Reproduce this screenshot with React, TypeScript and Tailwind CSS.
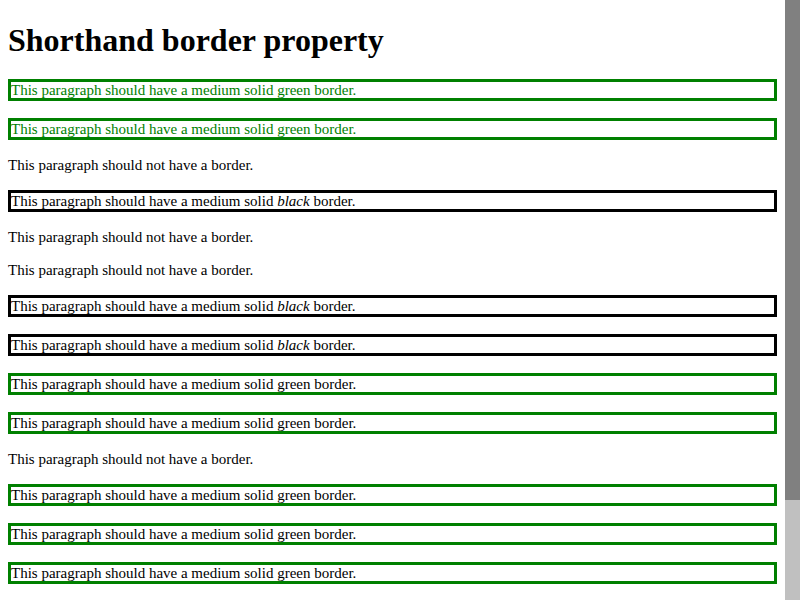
import type { ReactNode } from 'react'

type Kind = 'green' | 'greenText' | 'black' | 'none'

const rows: Kind[] = [
  'greenText',
  'greenText',
  'none',
  'black',
  'none',
  'none',
  'black',
  'black',
  'green',
  'green',
  'none',
  'green',
  'green',
  'green',
]

function Para({ kind }: { kind: Kind }) {
  let cls = ''
  let body: ReactNode = 'This paragraph should have a medium solid green border.'
  if (kind === 'greenText') cls = 'border-[3px] border-[#008000] text-[#008000]'
  if (kind === 'green') cls = 'border-[3px] border-[#008000]'
  if (kind === 'black') {
    cls = 'border-[3px] border-black'
    body = (
      <>
        This paragraph should have a medium solid <em>black</em> border.
      </>
    )
  }
  if (kind === 'none') body = 'This paragraph should not have a border.'
  return <p className={`text-[15px] leading-[16px] ${cls}`}>{body}</p>
}

export default function App() {
  return (
    <div className="flex h-[600px] w-[800px] overflow-hidden bg-white font-['Liberation_Serif','Times_New_Roman',serif] text-black">
      <main className="flex-1 overflow-hidden px-[8px] pt-[22px]">
        <h1 className="text-[32px] font-bold leading-[37px]">Shorthand border property</h1>
        <div className="mt-[20px] flex flex-col gap-[17px]">
          {rows.map((k, i) => (
            <Para key={i} kind={k} />
          ))}
        </div>
      </main>
      {/* scrollbar */}
      <div className="flex w-[15px] shrink-0 flex-col">
        <div className="h-[500px] bg-[#808080]" />
        <div className="flex-1 bg-[#c0c0c0]" />
      </div>
    </div>
  )
}
